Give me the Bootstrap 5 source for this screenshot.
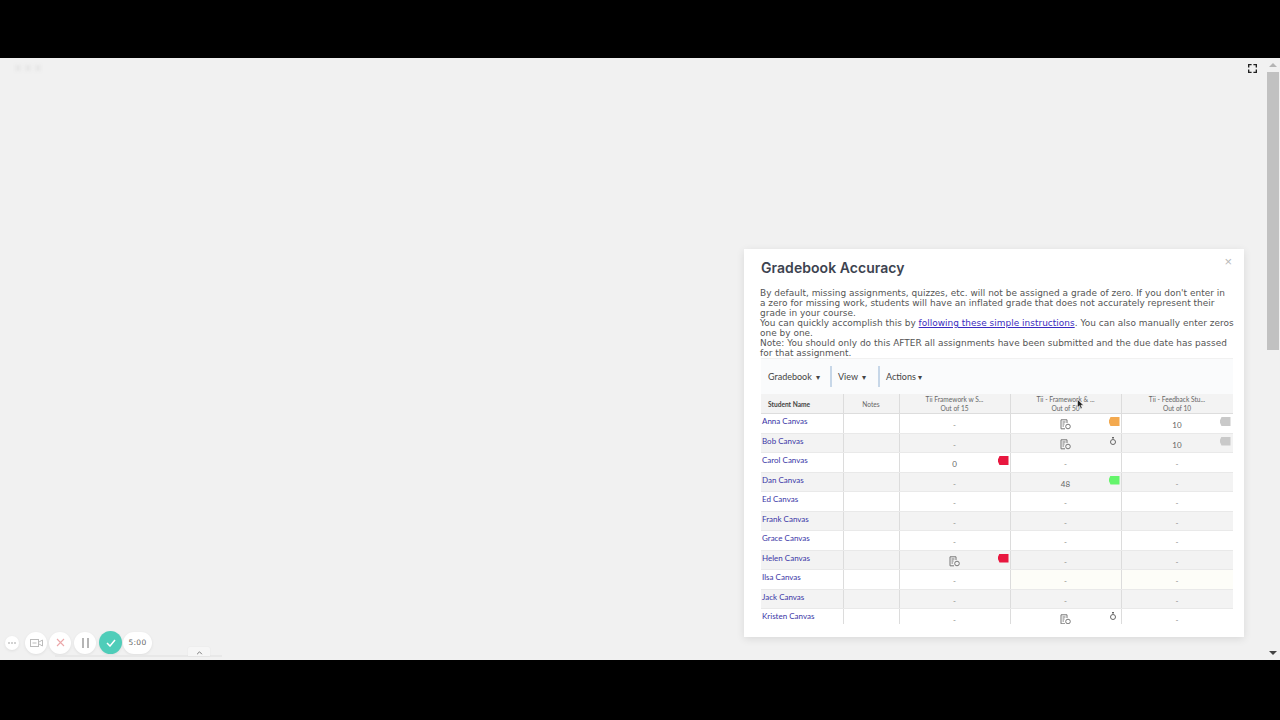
<!DOCTYPE html>
<html lang="en">
<head>
<meta charset="utf-8">
<title>Gradebook Accuracy</title>
<link href="https://cdn.jsdelivr.net/npm/bootstrap@5.3.0/dist/css/bootstrap.min.css" rel="stylesheet">
<style>
html,body{margin:0;height:720px;overflow:hidden;background:#000}
.letterbox{height:58px;background:#000}
.letterbox-b{height:60px;background:#000}
.stage{height:602px;background:#f1f1f1;position:relative;overflow:hidden}
.dots{position:absolute;left:15px;top:7px;gap:4px;filter:blur(1.5px)}
.dots i{width:6px;height:6px;background:#e8e8e8;display:block}
.fs-icon{position:absolute;left:1248px;top:6px}
.sbar{position:absolute;right:0;top:0;width:14px;height:602px;background:#f1f1f1}
.sthumb{position:absolute;left:1px;top:14px;width:12px;height:278px;background:#c1c1c1}
.sarrow{position:absolute;left:3px;width:0;height:0;border-left:4px solid transparent;border-right:4px solid transparent}
.sarrow.up{top:5px;border-bottom:4px solid #b5b5b5}
.sarrow.down{bottom:5px;border-top:4px solid #444}
.win{position:absolute;left:744px;top:191px;width:500px;height:388px;background:#fff;box-shadow:0 2px 8px rgba(0,0,0,.1);overflow:hidden;padding:0 11px 0 17px}
.win-x{position:absolute;right:12px;top:6px;color:#b9b9b9;font:300 13px/13px "Liberation Sans",sans-serif}
.win-title{font:600 14px/18px Inter,"Open Sans",sans-serif;color:#3d4350;margin:10px 0 0;height:18px;letter-spacing:.05px}
.win-copy{font:8.95px/10px "DejaVu Sans",sans-serif;color:#555;margin:11px 0 0 -1px;letter-spacing:.02px;white-space:nowrap}
.win-copy a{color:#3a2bc0}
.tools{height:36px;align-items:center;background:#fafbfc;border-top:1px solid #f1f1f1;font:9px/12px Lato,sans-serif;color:#444}
.tools span{display:block;white-space:nowrap}
.tools .t1{padding-left:7px;width:69px;line-height:21px}
.tools .t2{width:48px;padding-left:6px;border-left:2px solid #c7d7e8;height:21px;line-height:21px}
.tools .t3{padding-left:6px;border-left:2px solid #c7d7e8;height:21px;line-height:21px}
.grid-wrap{height:230px;overflow:hidden}
.gtable{width:472px;table-layout:fixed;border-collapse:collapse;font-family:Lato,sans-serif;color:#555;margin:0}
.gtable th{height:19px;background:#f3f3f3;font-weight:400;font-size:6.6px;line-height:9px;text-align:center;color:#666;border-left:1px solid #dcdcdc;border-bottom:1px solid #ddd;padding:1px 0 0;white-space:nowrap;vertical-align:middle}
.gtable th:first-child{border-left:0;font-weight:700;font-size:6.6px;color:#444;text-align:left;padding-left:7px}
.gtable th:last-child,.gtable td:last-child{border-right:1px solid #ddd}
.gtable td{height:19.5px;padding:0;border-left:1px solid #dcdcdc;border-bottom:1px solid #e9e9e9;font-size:8px;text-align:center;vertical-align:middle;position:relative;line-height:8px}
.gtable td:first-child{border-left:0;text-align:left;padding:0 0 4px 1px;color:#3a35a6;font-size:8px;vertical-align:middle}
.gtable tr.alt td{background:#f3f3f3}
.gtable tr.cream td{background:#fdfdf8}
.gtable tr.cream td:first-child,.gtable tr.cream td:nth-child(2),.gtable tr.cream td:nth-child(3){background:#fff}
.val{display:block;padding-top:4px;color:#666}
.dash{display:block;padding-top:4px;color:#888}
.flag{position:absolute;top:3px;right:1px;width:11px;height:9px;clip-path:polygon(18% 0,100% 0,100% 100%,18% 100%,0 50%)}
td:last-child .flag{right:2px}
.fl-o{background:#f3a94f}.fl-g{background:#c9c9c9}.fl-r{background:#e8173f}.fl-n{background:#64f56b}
.timer{position:absolute;top:3px;right:5px}
.sub-ico{display:block;margin:3px auto 0}
.pointer{position:absolute;left:1077px;top:341px}
.ctrls{position:absolute;left:5px;top:573px;gap:0;align-items:center}
.ctl{background:#fff;border-radius:50%;display:flex;align-items:center;justify-content:center;box-shadow:0 1px 3px rgba(0,0,0,.08)}
.c0{width:14px;height:14px;margin-right:6px}
.c1{width:22px;height:22px;margin-right:2px}
.c2{width:22px;height:22px;margin-right:3px}
.c3{width:22px;height:22px;margin-right:3px}
.c4{width:23px;height:23px;margin-right:1px;background:#4fcdb9}
.c5{width:29px;height:22px;border-radius:11px;font:7.5px/8px "DejaVu Sans",sans-serif;color:#666;letter-spacing:.3px}
.tab{position:absolute;left:188px;top:589px;width:22px;height:9px;background:#f6f6f6;border-radius:2px 2px 0 0;text-align:center;box-shadow:0 0 2px rgba(0,0,0,.06)}
.tabline{position:absolute;left:55px;top:597px;width:167px;height:2px;background:#e8e8e8}
</style>
</head>
<body>
<div class="letterbox"></div>
<main class="stage">
  <div class="dots d-flex"><i></i><i></i><i></i></div>
  <svg class="fs-icon" width="9" height="9" viewBox="0 0 10 10" fill="#222" aria-hidden="true"><path d="M0 0h4v1.500H1.500V4H0zM6 0h4v4H8.500V1.500H6zM0 6h1.500v2.500H4V10H0zM8.500 6H10v4H6V8.500h2.500z"/></svg>

  <section class="win">
    <div class="win-x">×</div>
    <div class="win-title">Gradebook Accuracy</div>
    <p class="win-copy">By default, missing assignments, quizzes, etc. will not be assigned a grade of zero. If you don't enter in<br>a zero for missing work, students will have an inflated grade that does not accurately represent their<br>grade in your course.<br>You can quickly accomplish this by <a href="#">following these simple instructions</a>. You can also manually enter zeros<br>one by one.<br>Note: You should only do this AFTER all assignments have been submitted and the due date has passed<br>for that assignment.</p>
    <div class="tools d-flex">
      <span class="t1">Gradebook &nbsp;<small>▾</small></span>
      <span class="t2">View &nbsp;<small>▾</small></span>
      <span class="t3">Actions <small>▾</small></span>
    </div>
    <div class="grid-wrap">
      <table class="gtable">
        <colgroup><col style="width:82px"><col style="width:56px"><col style="width:111px"><col style="width:111px"><col style="width:112px"></colgroup>
        <thead><tr><th>Student Name</th><th>Notes</th><th>Tii Framework w S...<br>Out of 15</th><th>Tii - Framework &amp; ...<br>Out of 50</th><th>Tii - Feedback Stu...<br>Out of 10</th></tr></thead>
        <tbody id="rows"></tbody>
      </table>
    </div>
  </section>

  <svg class="pointer" width="7" height="11" viewBox="0 0 7 11" aria-hidden="true"><path d="M.5 .5v8l2-1.800 1.300 3 1.400-.6-1.300-2.900H6.500z" fill="#222" stroke="#fff" stroke-width=".5"/></svg>

  <div class="sbar"><div class="sarrow up"></div><div class="sthumb"></div><div class="sarrow down"></div></div>

  <div class="ctrls d-flex">
    <div class="ctl c0"><svg width="8" height="2" viewBox="0 0 8 2" fill="#999"><circle cx="1" cy="1" r=".8"/><circle cx="4" cy="1" r=".8"/><circle cx="7" cy="1" r=".8"/></svg></div>
    <div class="ctl c1"><svg width="13" height="10" viewBox="0 0 13 10" fill="none" stroke="#bbb"><rect x=".5" y="1.500" width="8" height="7"/><path d="M9 4l3.500-2v6L9 6M2.500 5h4"/></svg></div>
    <div class="ctl c2"><svg width="9" height="9" viewBox="0 0 9 9" fill="none" stroke="#eba7a9" stroke-width="1.100"><path d="M1 1l7 7M8 1L1 8"/></svg></div>
    <div class="ctl c3"><svg width="7" height="10" viewBox="0 0 7 10" fill="#b5b5b5"><rect x="0" width="2" height="10"/><rect x="5" width="2" height="10"/></svg></div>
    <div class="ctl c4"><svg width="10" height="8" viewBox="0 0 10 8" fill="none" stroke="#fff" stroke-width="1.500"><path d="M1 4l3 3 5-6"/></svg></div>
    <div class="ctl c5">5:00</div>
  </div>
  <div class="tabline"></div>
  <div class="tab"><svg width="7" height="4" viewBox="0 0 7 5" fill="none" stroke="#777" stroke-width="1.200" class="d-block mx-auto mt-1"><path d="M.5 4l3-3 3 3"/></svg></div>
</main>
<div class="letterbox-b"></div>
<script>
var sub='<svg class="sub-ico" width="11" height="11" viewBox="0 0 11 11" fill="none" stroke="#777" stroke-width="1"><path d="M1 .8h6v3.200M1 .8v9h4"/><path d="M2.500 3h3M2.500 5h2M2.500 7h1.500" /><circle cx="8" cy="7.500" r="2.300"/></svg>';
var tim='<svg class="timer" width="6" height="8" viewBox="0 0 6 8" fill="none" stroke="#666" stroke-width="1"><path d="M2 .5h2M3 .5v1.500"/><circle cx="3" cy="5" r="2.500"/></svg>';
var d='<span class="dash">-</span>';
function v(t){return '<span class="val">'+t+'</span>';}
function f(c){return '<span class="flag '+c+'"></span>';}
var data=[
['Anna',d,sub+f('fl-o'),v(10)+f('fl-g')],
['Bob',d,sub+tim,v(10)+f('fl-g')],
['Carol',v(0)+f('fl-r'),d,d],
['Dan',d,v(48)+f('fl-n'),d],
['Ed',d,d,d],['Frank',d,d,d],['Grace',d,d,d],
['Helen',sub+f('fl-r'),d,d],
['Ilsa',d,d,d],['Jack',d,d,d],
['Kristen',d,sub+tim,d]];
document.getElementById('rows').innerHTML=data.map(function(r,i){
  var cls=i==8?'cream':(i%2?'alt':'');
  return '<tr class="'+cls+'"><td>'+r[0]+' Canvas</td><td></td><td>'+r[1]+'</td><td>'+r[2]+'</td><td>'+r[3]+'</td></tr>';
}).join('');
</script>
<script src="https://cdn.jsdelivr.net/npm/bootstrap@5.3.0/dist/js/bootstrap.bundle.min.js"></script>
</body>
</html>
